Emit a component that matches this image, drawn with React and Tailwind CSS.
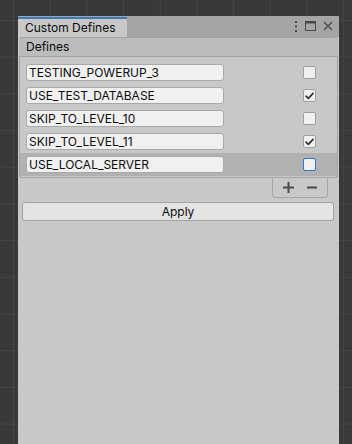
import React from 'react';

// rows of the reorderable list
const defines = [
  { name: 'TESTING_POWERUP_3', on: false },
  { name: 'USE_TEST_DATABASE', on: true },
  { name: 'SKIP_TO_LEVEL_10', on: false },
  { name: 'SKIP_TO_LEVEL_11', on: true },
  { name: 'USE_LOCAL_SERVER', on: false, selected: true },
];

function Check() {
  return (
    <svg width="9" height="8" viewBox="0 0 9 8" fill="none">
      <path d="M1 4.2 L3.4 6.4 L8 1.4" stroke="#2b2b2b" strokeWidth="1.6" strokeLinecap="round" strokeLinejoin="round" />
    </svg>
  );
}

export default function App() {
  return (
    <div
      className="w-[352px] h-[444px] overflow-hidden bg-[#393939] bg-[linear-gradient(to_right,#454545_1px,transparent_1px),linear-gradient(to_bottom,#454545_1px,transparent_1px)] bg-[length:36.7px_36.7px] bg-[position:13px_20px] text-[12px] text-[#0b0b0b]"
      style={{ fontFamily: 'Inter, "Noto Sans", sans-serif' }}
    >
      <div className="ml-[18px] mt-[16px] w-[321px] h-[428px] flex flex-col bg-[#c8c8c8]">
        {/* tab bar */}
        <div className="h-[21px] shrink-0 bg-[#a5a5a5] flex">
          <div className="mt-[1px] w-[109px] bg-[#c8c8c8] border-t-2 border-[#3a7ac5] pl-[7px] leading-[17px]">
            Custom Defines
          </div>
          <div className="flex-1" />
          <div className="flex items-center gap-[7px] pr-[6px] pb-[1px]">
            <svg width="4" height="11" viewBox="0 0 4 11">
              <rect x="1" y="0" width="2" height="2" fill="#4a4a4a" />
              <rect x="1" y="4.5" width="2" height="2" fill="#4a4a4a" />
              <rect x="1" y="9" width="2" height="2" fill="#4a4a4a" />
            </svg>
            <svg width="11" height="10" viewBox="0 0 11 10" fill="none">
              <rect x="0.5" y="0.5" width="10" height="9" stroke="#4a4a4a" />
              <rect x="0.5" y="0.5" width="10" height="2" fill="#4a4a4a" />
            </svg>
            <svg width="10" height="10" viewBox="0 0 10 10" fill="none">
              <path d="M1 1 L9 9 M9 1 L1 9" stroke="#4a4a4a" strokeWidth="1.4" />
            </svg>
          </div>
        </div>

        {/* list header */}
        <div className="mx-[1px] h-[20px] shrink-0 bg-[#bcbcbc] border-y border-[#a2a2a2] rounded-t-[3px] pl-[7px] leading-[18px]">
          Defines
        </div>

        {/* list body */}
        <div className="mx-[1px] shrink-0 border-x border-b border-[#a6a6a6] rounded-b-[3px] pt-[4px] pb-[1px]">
          {defines.map((d) => (
            <div
              key={d.name}
              className={`h-[23px] flex items-center pl-[6px] ${d.selected ? 'bg-[#b1b1b1]' : ''}`}
            >
              <div className="w-[198px] h-[17px] bg-[#f0f0f0] border border-[#a8a8a8] rounded-[3px] pl-[2px] leading-[15px]">
                {d.name}
              </div>
              <div className="flex-1" />
              <div
                className={`mr-[21px] w-[13px] h-[13px] rounded-[2px] bg-[#f0f0f0] border flex items-center justify-center ${d.selected ? 'border-[#2d75d6]' : 'border-[#a0a0a0]'}`}
              >
                {d.on && <Check />}
              </div>
            </div>
          ))}
        </div>

        {/* add / remove footer */}
        <div className="flex justify-end pr-[11px] shrink-0">
          <div className="w-[56px] h-[20px] border-x border-b border-[#a6a6a6] rounded-b-[4px] flex items-center justify-center gap-[13px] pb-[1px]">
            <svg width="11" height="11" viewBox="0 0 11 11">
              <rect x="0" y="4.5" width="11" height="2" fill="#4a4a4a" />
              <rect x="4.5" y="0" width="2" height="11" fill="#4a4a4a" />
            </svg>
            <svg width="10" height="11" viewBox="0 0 10 11">
              <rect x="0" y="4.5" width="10" height="2" fill="#4a4a4a" />
            </svg>
          </div>
        </div>

        {/* apply */}
        <div className="pl-[4px] pr-[5px] pt-[4px]">
          <div className="h-[19px] bg-[#e4e4e4] border border-[#a2a2a2] rounded-[3px] text-center leading-[17px]">
            Apply
          </div>
        </div>
      </div>
    </div>
  );
}
